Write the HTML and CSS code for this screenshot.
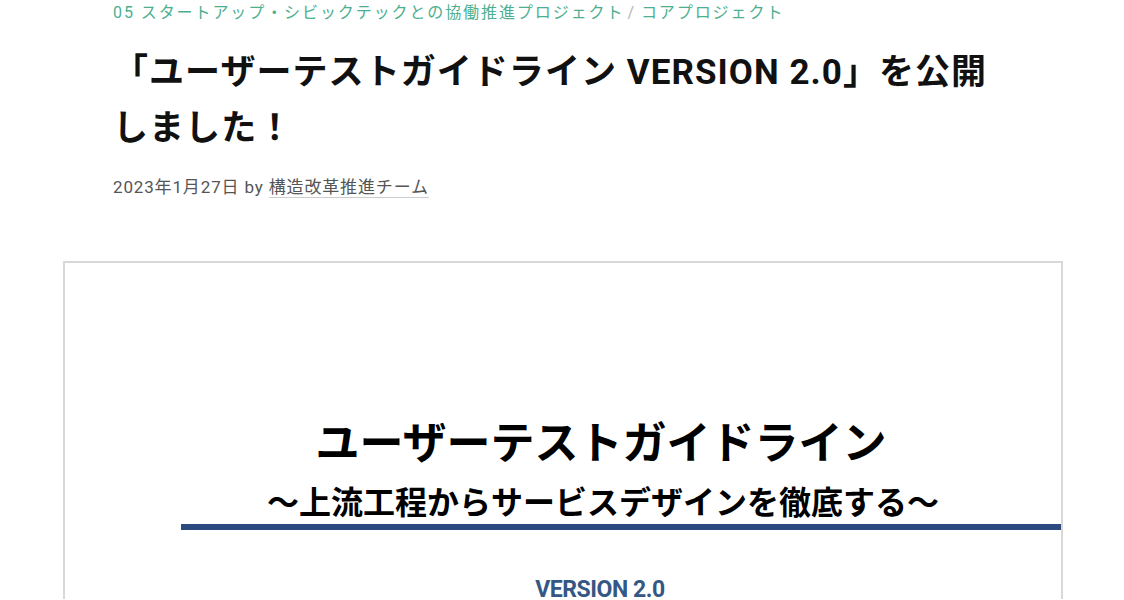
FILE: index.html
```html
<!DOCTYPE html>
<html lang="ja">
<head>
<meta charset="utf-8">
<title>ユーザーテストガイドライン VERSION 2.0</title>
<link rel="stylesheet" href="styles.css">
</head>
<body>
<article class="post">
  <header class="post-header">
    <div class="cats"><a href="#">05 スタートアップ・シビックテックとの協働推進プロジェクト</a><span class="sep">/</span><a href="#">コアプロジェクト</a></div>
    <h1 class="title">「ユーザーテストガイドライン VERSION 2.0」を公開しました！</h1>
    <div class="meta">2023年1月27日 by <a class="author" href="#">構造改革推進チーム</a></div>
  </header>
  <figure class="cover">
    <div class="cover-inner">
      <div class="cover-title">ユーザーテストガイドライン</div>
      <div class="cover-sub">〜上流工程からサービスデザインを徹底する〜</div>
      <div class="cover-bar"></div>
      <div class="cover-ver">VERSION 2.0</div>
    </div>
  </figure>
</article>
</body>
</html>
```
FILE: styles.css
```css
html, body {
  margin: 0;
  padding: 0;
  background: #fff;
}
body {
  font-family: Roboto, "Noto Sans CJK JP", sans-serif;
  color: #111;
  overflow: hidden;
}
.post {
  width: 1124px;
}
.post-header {
  padding-left: 113px;
  padding-right: 120px;
}
.cats {
  font-size: 16px;
  line-height: 24px;
  padding-top: 1px;
  letter-spacing: 0.12em;
  color: #4caf8f;
}
.cats a {
  color: #4caf8f;
  text-decoration: none;
}
.sep {
  color: #b5b5b5;
  margin: 0 5px 0 3px;
}
.title {
  margin: 20px 0 0;
  font-size: 35px;
  line-height: 56px;
  font-weight: 700;
  color: #111;
  width: 878px;
  letter-spacing: 0.03em;
}
.meta {
  margin-top: 18px;
  font-size: 17px;
  line-height: 24px;
  letter-spacing: 0.05em;
  color: #555;
}
.author {
  color: #555;
  text-decoration: none;
  border-bottom: 1px solid #ccc;
}
.cover {
  margin: 62px 0 0 63px;
  width: 996px;
  border: 2px solid #d8d8d8;
  border-bottom: none;
  height: 336px;
  background: #fff;
}
.cover-inner {
  padding-top: 150px;
  font-family: "Noto Sans CJK JP", sans-serif;
}
.cover-title {
  padding-left: 76px;
  text-align: center;
  font-size: 44px;
  line-height: 54px;
  font-weight: 700;
  color: #000;
}
.cover-sub {
  padding-left: 80px;
  text-align: center;
  font-size: 32px;
  line-height: 48px;
  margin-top: 9px;
  font-weight: 700;
  color: #000;
}
.cover-bar {
  margin: 0 0 0 116px;
  height: 6px;
  background: #2b4a80;
}
.cover-ver {
  padding-left: 74px;
  text-align: center;
  margin-top: 49px;
  font-family: Roboto, sans-serif;
  font-size: 23px;
  line-height: 22px;
  font-weight: 700;
  color: #345784;
  letter-spacing: -0.02em;
}
```
